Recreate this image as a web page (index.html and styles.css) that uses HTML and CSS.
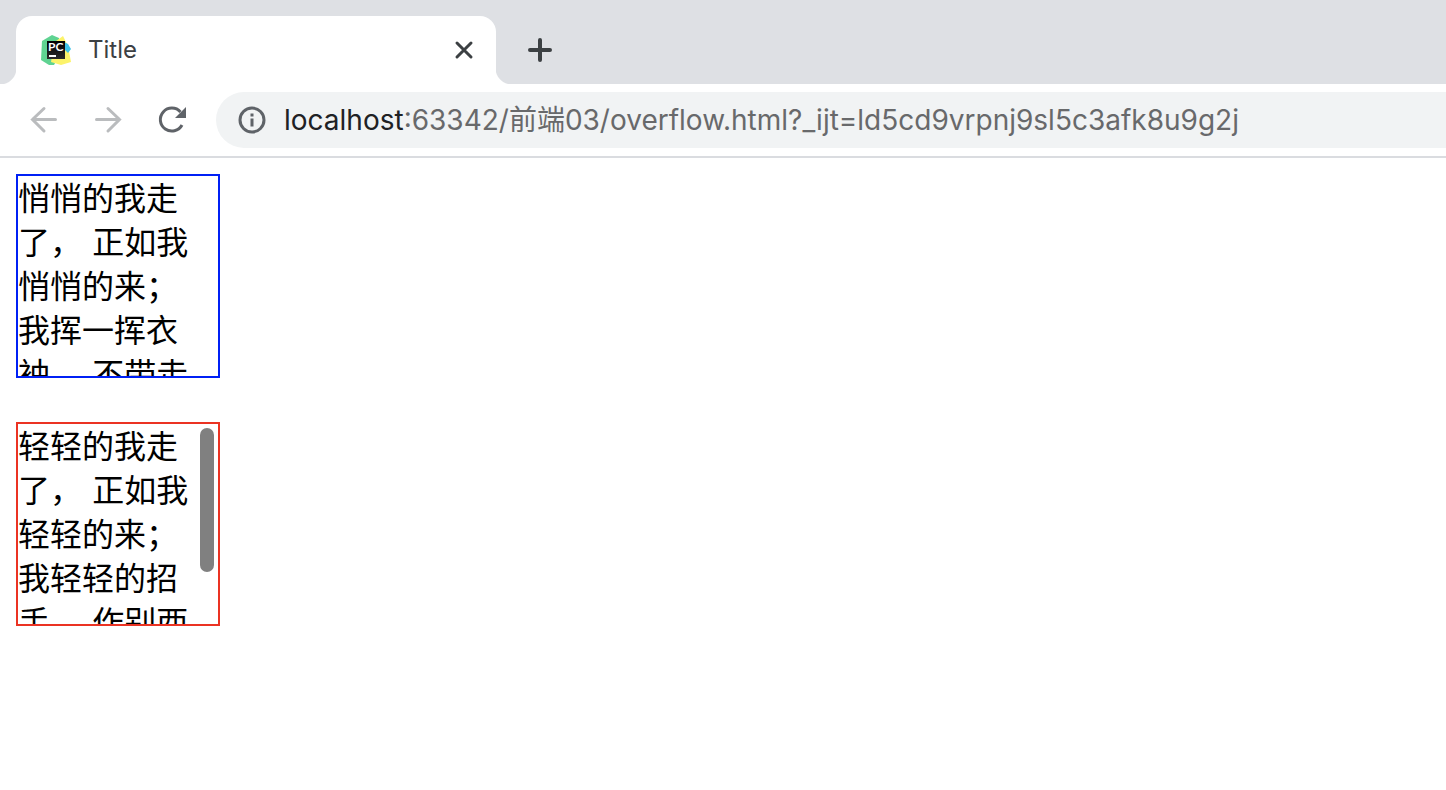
FILE: index.html
```html
<!DOCTYPE html>
<html lang="zh-CN">
<head>
<meta charset="utf-8">
<title>Title</title>
<link rel="stylesheet" href="styles.css">
</head>
<body>

<header class="browser">
  <div class="tabs">
    <div class="tab">
      <svg class="favicon" width="32" height="32" viewBox="0 0 32 32">
        <defs>
          <linearGradient id="dark" x1="0" y1="0" x2="0" y2="1">
            <stop offset="0" stop-color="#000"/>
            <stop offset="1" stop-color="#2a2a2a"/>
          </linearGradient>
        </defs>
        <path d="M2 7 L12 1 L19 4 L20 20 L14 31 L9 31 L1 26z" fill="#5fd392"/>
        <path d="M23 2 L28 12 L31 28 L21 31 L11 28 L12 22 L16 7z" fill="#fcf36a"/>
        <path d="M24 8 L28 10 L31 15 L28 19 L24 15z" fill="#3fc3e8"/>
        <rect x="7" y="7" width="18" height="18" fill="url(#dark)"/>
        <rect x="9" y="21" width="7" height="2" fill="#fff"/>
        <text class="favicon-text" x="8" y="17">PC</text>
      </svg>
      <span class="tab-title">Title</span>
      <button class="icon-btn close" type="button" aria-label="Close tab">
        <svg width="24" height="24" viewBox="0 0 24 24" fill="none" stroke="#3c4043" stroke-width="3" stroke-linecap="round"><path d="M5 5L19 19M19 5L5 19"/></svg>
      </button>
    </div>
    <button class="icon-btn new-tab" type="button" aria-label="New tab">
      <svg width="24" height="24" viewBox="0 0 24 24" fill="none" stroke="#3c4043" stroke-width="4" stroke-linecap="round"><path d="M12 2V22M2 12H22"/></svg>
    </button>
  </div>

  <div class="toolbar">
    <button class="icon-btn" type="button" aria-label="Back">
      <svg width="32" height="32" viewBox="0 0 32 32" fill="none" stroke="#babcbe" stroke-width="3" stroke-linecap="round"><path d="M27.500 15.500H4.500M16 4.500L4.500 15.500L16 27"/></svg>
    </button>
    <button class="icon-btn" type="button" aria-label="Forward">
      <svg width="32" height="32" viewBox="0 0 32 32" fill="none" stroke="#babcbe" stroke-width="3" stroke-linecap="round"><path d="M4.500 15.500H27.500M16 4.500L27.500 15.500L16 27"/></svg>
    </button>
    <button class="icon-btn" type="button" aria-label="Reload">
      <svg width="32" height="32" viewBox="0 0 32 32"><path d="M26 21A11.500 11.500 0 1 1 24.500 8" fill="none" stroke="#5f6368" stroke-width="3"/><path d="M30 3V14H19z" fill="#5f6368"/></svg>
    </button>
    <div class="omnibox">
      <svg width="28" height="28" viewBox="0 0 28 28"><circle cx="14" cy="14" r="12" fill="none" stroke="#5f6368" stroke-width="3"/><path d="M12.500 7.500h3v3h-3zM12.500 12.500h3v8h-3z" fill="#5f6368"/></svg>
      <label class="host" for="url">localhost</label>
      <input class="url" id="url" type="text" spellcheck="false" value=":63342/前端03/overflow.html?_ijt=ld5cd9vrpnj9sl5c3afk8u9g2j">
    </div>
  </div>
</header>

<main class="page">
  <div class="box box-hidden">悄悄的我走了， 正如我悄悄的来； 我挥一挥衣袖， 不带走一片云彩。</div>
  <div class="scroller">
    <div class="box box-scroll">轻轻的我走了， 正如我轻轻的来； 我轻轻的招手， 作别西天的云彩。</div>
    <div class="thumb"></div>
  </div>
</main>

</body>
</html>
```
FILE: styles.css
```css
* {
    box-sizing: border-box;
}

body {
    margin: 0;
    background: #fff;
    color: #000;
    font-family: "DejaVu Sans", "Noto Sans CJK SC", sans-serif;
}

/* browser window */
.browser {
    font-family: Inter, "Noto Sans CJK SC", sans-serif;
    border-bottom: 2px solid #dadce0;
}

.tabs {
    display: flex;
    height: 84px;
    padding: 16px 16px 0;
    background: #dee0e4;
}

.tab {
    position: relative;
    display: flex;
    align-items: center;
    width: 480px;
    height: 68px;
    padding: 0 20px 0 24px;
    background: #fff;
    border-radius: 16px 16px 0 0;
}

/* curved feet of the tab */
.tab::before,
.tab::after {
    content: "";
    position: absolute;
    bottom: 0;
    width: 16px;
    height: 16px;
}

.tab::before {
    left: -16px;
    background: radial-gradient(circle at 0 0, transparent 16px, #fff 17px);
}

.tab::after {
    right: -16px;
    background: radial-gradient(circle at 100% 0, transparent 16px, #fff 17px);
}

.favicon-text {
    fill: #fff;
    font-family: Lato, sans-serif;
    font-size: 12px;
    font-weight: bold;
}

.tab-title {
    flex: 1;
    margin-left: 16px;
    color: #3c4043;
    font-size: 24px;
    line-height: 32px;
}

.icon-btn {
    display: flex;
    padding: 0;
    border: 0;
    background: none;
}

.new-tab {
    align-self: center;
    margin: -16px 0 0 32px;
    padding-top: 16px;
}

.toolbar {
    display: flex;
    align-items: center;
    gap: 32px;
    height: 72px;
    padding-left: 28px;
}

.omnibox {
    display: flex;
    flex: 1;
    align-items: center;
    height: 56px;
    margin-left: -4px;
    padding-left: 22px;
    background: #f1f3f4;
    border-radius: 28px 0 0 28px;
    font-size: 28px;
    line-height: 40px;
}

.host {
    margin-left: 18px;
    color: #202124;
}

.url {
    flex: 1;
    min-width: 0;
    padding: 0;
    border: 0;
    outline: 0;
    background: none;
    color: #68696b;
    font: inherit;
}

/* page content */
.page {
    padding: 16px;
}

.box {
    width: 204px;
    height: 204px;
    padding-top: 1px;
    border: 2px solid;
    font-size: 32px;
    line-height: 44px;
}

.box-hidden {
    margin-bottom: 44px;
    border-color: #0020f5;
    overflow: hidden;
}

.scroller {
    position: relative;
    width: 204px;
}

.box-scroll {
    border-color: #eb3323;
    overflow-y: scroll;
    scrollbar-width: none;
}

/* overlay scrollbar */
.thumb {
    position: absolute;
    top: 6px;
    right: 6px;
    width: 14px;
    height: 144px;
    background: #808080;
    border-radius: 7px;
}
```
